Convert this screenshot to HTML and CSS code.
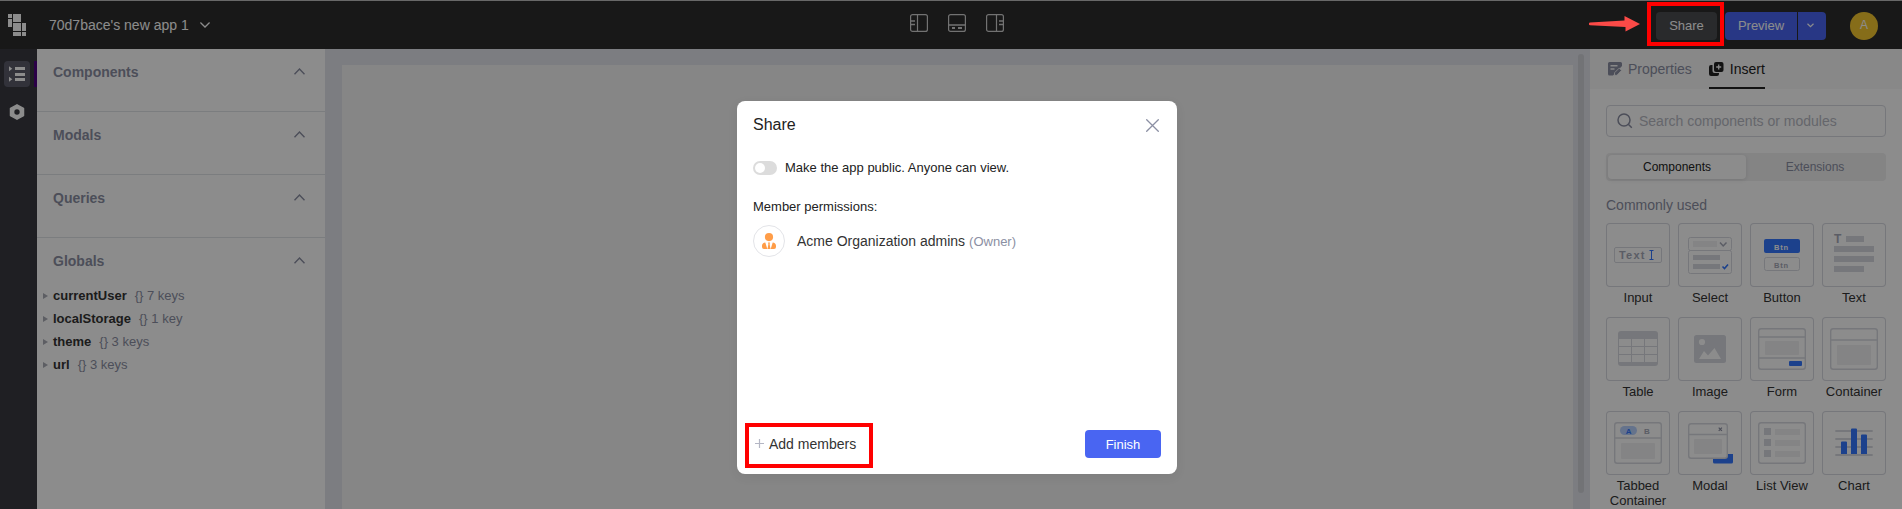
FILE: index.html
```html
<!DOCTYPE html>
<html lang="en">
<head>
<meta charset="utf-8">
<title>App editor</title>
<link rel="stylesheet" href="styles.css">
</head>
<body>
<div class="app">
  <header class="topbar">
    <div class="topbar-left">
      <svg class="logo" width="18" height="22" viewBox="0 0 18 22" fill="#fff"><path d="M0 0h4v4H0zM5 0h8v8H5zM0 5h4v8H0zM5 9h8v8H5zM14 9h4v8h-4zM5 18h8v4H5zM14 18h4v4h-4z"/></svg>
      <span class="app-name">70d7bace's new app 1</span>
      <svg width="10" height="6" viewBox="0 0 10 6" fill="none" stroke="#fff" stroke-width="1.3"><path d="M.4.5 5 5 9.6.5"/></svg>
    </div>
    <div class="layout-icons">
      <svg width="18" height="18" viewBox="0 0 18 18" fill="none" stroke="#d0d0d0"><rect x=".6" y=".6" width="16.8" height="16.8" rx="2" stroke-width="1.2"/><path d="M7.5 1v16" stroke-width="1.2"/><path d="M1 7h4M1 10.500h4" stroke-width="1.500"/></svg>
      <svg width="18" height="18" viewBox="0 0 18 18" fill="none" stroke="#d0d0d0"><rect x=".6" y=".6" width="16.8" height="16.8" rx="2" stroke-width="1.2"/><path d="M1 11h16" stroke-width="1.500"/><path d="M4 14h3M10 14h4" stroke-width="2"/></svg>
      <svg width="18" height="18" viewBox="0 0 18 18" fill="none" stroke="#d0d0d0"><rect x=".6" y=".6" width="16.800" height="16.800" rx="2" stroke-width="1.2"/><path d="M10.500 1v16" stroke-width="1.2"/><path d="M13 7h4M13 10.500h4" stroke-width="1.500"/></svg>
    </div>
    <div class="topbar-right">
      <button class="btn btn-share">Share</button>
      <div class="split">
        <button class="btn btn-preview">Preview</button>
        <button class="btn btn-more" aria-label="More"><svg width="7" height="5" viewBox="0 0 7 5" fill="none" stroke="#fff" stroke-width="1.2"><path d="M.5.8 3.500 3.700 6.500.8"/></svg></button>
      </div>
      <div class="user">A</div>
    </div>
  </header>
  <div class="body">
    <nav class="rail">
      <div class="rail-item active"><svg width="16" height="16" viewBox="0 0 16 16" fill="#fff"><path d="M0 .2 3.300 2.700 0 5.200zM0 10.800l3.300 2.500L0 15.800zM6 1h10v3H6zM6 7h10v3H6zM6 12h10v3H6z"/></svg></div>
      <div class="rail-item"><svg width="16" height="16" viewBox="0 0 16 16"><path d="M8 .8 14.500 4.400v7.200L8 15.200 1.500 11.600V4.400z" fill="#fff" stroke="#fff" stroke-width="1.500" stroke-linejoin="round"/><circle cx="8" cy="8" r="2.700" fill="#393a41"/></svg></div>
    </nav>
    <aside class="explorer">
      <section class="group"><h3>Components</h3><svg class="caret" viewBox="0 0 11 7"><path d="M.5 6.200 5.500 1l5 5.200"/></svg></section>
      <section class="group"><h3>Modals</h3><svg class="caret" viewBox="0 0 11 7"><path d="M.5 6.200 5.500 1l5 5.200"/></svg></section>
      <section class="group"><h3>Queries</h3><svg class="caret" viewBox="0 0 11 7"><path d="M.5 6.200 5.500 1l5 5.200"/></svg></section>
      <section class="group last"><h3>Globals</h3><svg class="caret" viewBox="0 0 11 7"><path d="M.5 6.200 5.500 1l5 5.200"/></svg></section>
      <ul class="tree">
        <li><b>currentUser</b><span>{} 7 keys</span></li>
        <li><b>localStorage</b><span>{} 1 key</span></li>
        <li><b>theme</b><span>{} 3 keys</span></li>
        <li><b>url</b><span>{} 3 keys</span></li>
      </ul>
    </aside>
    <main class="workspace"><div class="canvas"></div><div class="scrollbar"></div></main>
    <aside class="panel">
      <div class="tabs">
        <div class="tab"><svg width="14" height="14" viewBox="0 0 14 14"><path d="M1.500 0h11A1.500 1.500 0 0 1 14 1.500V4L5 13.500H1.500A1.500 1.500 0 0 1 0 12V1.500A1.500 1.500 0 0 1 1.500 0z" fill="#8b8fa3"/><path d="M2.500 3.700h7M2.500 7h4" stroke="#f7f7f7" stroke-width="1.400"/><path d="m6.500 10.800 4.700-4.700 2.300 2.300-4.600 4.900H6.500z" fill="#8b8fa3" stroke="#f7f7f7" stroke-width=".8"/></svg>Properties</div>
        <div class="tab current"><svg width="15" height="14" viewBox="0 0 15 14"><path d="M3.500 3H2a2 2 0 0 0-2 2v7a2 2 0 0 0 2 2h6a2 2 0 0 0 2-2v-1H5.500a2 2 0 0 1-2-2z" fill="#222"/><rect x="5" width="9.500" height="10" rx="2" fill="#222"/><path d="M9.700 2.500v5M7.200 5h5" stroke="#f7f7f7" stroke-width="1.300"/></svg>Insert</div>
      </div>
      <div class="panel-body">
        <div class="search"><svg width="16" height="16" viewBox="0 0 16 16" fill="none" stroke="#8b8fa3" stroke-width="1.500"><circle cx="7" cy="7" r="6"/><path d="m11.300 11.300 3.500 3.500"/></svg>Search components or modules</div>
        <div class="segmented"><div class="seg on">Components</div><div class="seg">Extensions</div></div>
        <h4>Commonly used</h4>
        <div class="grid">
          <figure><svg class="tile" viewBox="0 0 64 64"><rect x="8.500" y="24.500" width="47" height="15" rx="1.500" class="line"/><text x="13" y="35.500" class="glyph t11">Text</text><path d="M43.500 27.500h4M45.500 27.500v9M43.500 36.500h4" stroke="#37f" fill="none"/></svg><figcaption>Input</figcaption></figure>
          <figure><svg class="tile" viewBox="0 0 64 64"><rect x="10.500" y="14.500" width="43" height="13" rx="2" class="line"/><rect x="10.500" y="27.500" width="43" height="23" rx="2" class="line"/><path d="M15 18h24v6H15z" class="pale"/><path d="m42 19.500 3.200 3.500 3.300-3.500" fill="none" stroke="#a6a9b8" stroke-width="1.500"/><path d="M15 32h27v5H15zM15 41h27v5H15z" class="fill"/><path d="m44.500 43.500 2 2 3.500-4" fill="none" stroke="#37f" stroke-width="1.600"/></svg><figcaption>Select</figcaption></figure>
          <figure><svg class="tile" viewBox="0 0 64 64"><rect x="14" y="16" width="36" height="14" rx="2" class="blue"/><text x="24" y="27" class="glyph t7 white">Btn</text><rect x="14.500" y="34.500" width="35" height="13" rx="2" class="line"/><text x="24" y="45" class="glyph t7">Btn</text></svg><figcaption>Button</figcaption></figure>
          <figure><svg class="tile" viewBox="0 0 64 64"><text x="12" y="20" class="glyph t12">T</text><path d="M24 13h18v6H24zM12 23h40v6H12zM12 33h40v6H12zM12 43h30v6H12z" class="fill"/></svg><figcaption>Text</figcaption></figure>
          <figure><svg class="tile" viewBox="0 0 64 64"><rect x="12" y="14" width="40" height="35" rx="3" class="fill"/><path d="M13 22h12v7H13zM26 22h12v7H26zM39 22h12v7H39zM13 30h12v7H13zM26 30h12v7H26zM39 30h12v7H39zM13 38h12v7H13zM26 38h12v7H26zM39 38h12v7H39z" fill="#fff"/></svg><figcaption>Table</figcaption></figure>
          <figure><svg class="tile" viewBox="0 0 64 64"><rect x="16" y="18" width="32" height="28" rx="2.500" class="fill"/><circle cx="24" cy="25" r="3.100" fill="#fff"/><path d="m21 42 5-8 4 4.500 6.500-7.500 6.500 11z" fill="#fff"/></svg><figcaption>Image</figcaption></figure>
          <figure><svg class="tile" viewBox="0 0 64 64"><rect x="8.700" y="11.700" width="46.600" height="40.600" rx="2.500" class="line thick"/><path d="M9 20h46M9 41h46" class="line thick"/><rect x="15" y="24" width="34" height="14" rx="1" class="pale"/><rect x="39" y="44" width="13" height="5" rx="1" class="blue"/></svg><figcaption>Form</figcaption></figure>
          <figure><svg class="tile" viewBox="0 0 64 64"><rect x="8.700" y="11.700" width="46.600" height="40.600" rx="2.500" class="line thick"/><path d="M9 23h46" class="line thick"/><rect x="15" y="28" width="34" height="20" rx="1" class="pale"/></svg><figcaption>Container</figcaption></figure>
          <figure><svg class="tile" viewBox="0 0 64 64"><rect x="8.700" y="11.700" width="46.600" height="40.600" rx="2.500" class="line thick"/><path d="M9 27h46" class="line thick"/><rect x="14" y="15" width="17" height="9" rx="4.500" fill="#b9d2ff"/><text x="19.700" y="22.500" class="glyph t8 bluetext">A</text><text x="38" y="22.500" class="glyph t8">B</text><rect x="15" y="32" width="34" height="16" rx="1" class="pale"/></svg><figcaption>Tabbed Container</figcaption></figure>
          <figure><svg class="tile" viewBox="0 0 64 64"><path d="M35 43h20v8a1.500 1.500 0 0 1-1.500 1.500h-17A1.500 1.500 0 0 1 35 51z" class="blue"/><rect x="10.700" y="12.700" width="38.600" height="34.600" rx="2.500" class="line thick white-bg"/><path d="M11 23.500h38" class="line thick"/><path d="m40.700 16.700 3.200 3.200M43.900 16.700l-3.200 3.200" stroke="#8b8fa3" stroke-width="1.200"/><rect x="16" y="28" width="28" height="15" rx="1" class="pale"/></svg><figcaption>Modal</figcaption></figure>
          <figure><svg class="tile" viewBox="0 0 64 64"><rect x="8.700" y="11.700" width="46.600" height="40.600" rx="2.500" class="line thick"/><path d="M14 17h7v7h-7zM14 28h7v7h-7zM14 39h7v7h-7z" class="fill"/><path d="M25 18h25v6H25zM25 29h25v6H25zM25 40h25v6H25z" class="pale"/></svg><figcaption>List View</figcaption></figure>
          <figure><svg class="tile" viewBox="0 0 64 64"><path d="M14 20h36M14 28h36M14 36h36M14 44h36" class="line chart"/><path d="M19 31.500a1 1 0 0 1 1-1h4a1 1 0 0 1 1 1V43h-6zM29 18.500a1 1 0 0 1 1-1h4a1 1 0 0 1 1 1V43h-6zM39 24.500a1 1 0 0 1 1-1h4a1 1 0 0 1 1 1V43h-6z" class="blue"/></svg><figcaption>Chart</figcaption></figure>
        </div>
      </div>
    </aside>
  </div>
</div>

<div class="mask">
  <div class="dialog" role="dialog">
    <div class="dialog-head"><h2>Share</h2><svg width="13" height="13" viewBox="0 0 13 13" stroke="#8b8fa3" stroke-width="1.300" stroke-linecap="round"><path d="m.7.7 11.600 11.600M12.300.7.7 12.300"/></svg></div>
    <div class="public-row"><span class="switch"></span>Make the app public. Anyone can view.</div>
    <div class="perm-title">Member permissions:</div>
    <div class="member">
      <span class="member-icon"><svg width="16" height="16" viewBox="0 0 16 16" fill="#ff9d48"><circle cx="8" cy="4.100" r="4.100"/><path d="M4.300 9.500 6.300 16H3a2 2 0 0 1-2-2v-1.200c0-1.700 1.400-3.100 3.300-3.300zM11.700 9.500 9.700 16H13a2 2 0 0 0 2-2v-1.200c0-1.700-1.400-3.100-3.300-3.300zM7 9.500h2l-.4 1.500.9 5h-3l.9-5z"/></svg></span>
      <span class="member-name">Acme Organization admins</span><span class="role">(Owner)</span>
    </div>
    <div class="dialog-foot">
      <div class="add"><svg width="9" height="9" viewBox="0 0 9 9" stroke="#b4b6c4" stroke-width="1.200"><path d="M4.500 0v9M0 4.500h9"/></svg>Add members</div>
      <button class="btn finish">Finish</button>
    </div>
  </div>
</div>

<div class="callout callout-share"></div>
<div class="callout callout-add"></div>
<svg class="arrow" width="52" height="18" viewBox="0 0 52 18"><path d="M1 7.600 35.500 5.500V1L51 9l-14.500 7.500V12L1 10.200a1.300 1.300 0 0 1 0-2.600z" fill="#fb4a47"/></svg>
</body>
</html>
```
FILE: styles.css
```css
* { box-sizing: border-box; }
body { margin: 0; font: 13px/1.2 "Liberation Sans", Arial, sans-serif; color: #333; overflow: hidden; }
h2, h3, h4, ul, figure { margin: 0; padding: 0; }
svg { display: block; flex: none; }
button { font: inherit; border: 0; padding: 0; }

.app { height: 509px; display: flex; flex-direction: column; overflow: hidden; }
.topbar { height: 49px; flex: none; background: #2c2c2c; border-top: 1px solid #bebebe; display: grid; grid-template-columns: 1fr auto 1fr; align-items: center; padding: 0 24px 0 8px; color: #fff; }
.topbar-left { display: flex; align-items: center; height: 48px; }
.logo { margin-top: 0; }
.app-name { font-size: 14px; margin: 1px 11px 0 23px; }
.layout-icons { display: flex; gap: 20px; margin: -4px 0 0 28px; }
.topbar-right { display: flex; align-items: center; justify-content: flex-end; margin-top: 1px; }
.btn { height: 28px; border-radius: 4px; color: #fff; font-size: 13px; display: flex; align-items: center; justify-content: center; padding-top: 1px; }
.btn-share { width: 61px; background: #4b4d50; margin-right: 8px; }
.split { display: flex; gap: 1px; }
.btn-preview { width: 72px; background: #4965f2; border-radius: 4px 0 0 4px; }
.btn-more { width: 28px; background: #4965f2; border-radius: 0 4px 4px 0; padding: 0 4px 0 0; }
.user { width: 28px; height: 28px; border-radius: 50%; margin-left: 24px; background: #f5c72f; display: flex; align-items: center; justify-content: center; font-size: 12px; }

.body { flex: 1; display: flex; min-height: 0; }
.rail { width: 37px; background: #393a41; padding: 12px 0 0 4px; display: flex; flex-direction: column; gap: 12px; }
.rail-item { position: relative; width: 26px; height: 26px; border-radius: 4px; display: flex; align-items: center; justify-content: center; }
.rail-item.active { background: #5b5c6b; }
.rail-item.active::after { content: ""; position: absolute; left: 30px; top: 0; width: 3px; height: 26px; background: #4f0081; }
.explorer { width: 288px; background: #fff; color: #8b8fa3; }
.group { height: 63px; border-bottom: 1px solid #e1e3e8; display: flex; justify-content: space-between; padding: 14px 20px 0 16px; }
.group.last { height: 50px; border: 0; }
.group h3 { font-size: 14px; line-height: 18px; }
.caret { width: 11px; height: 7px; margin-top: 5px; fill: none; stroke: #8b8fa3; stroke-width: 1.4; }
.tree { list-style: none; padding: 0 0 0 6px; margin-top: -4px; }
.tree li { height: 23px; display: flex; align-items: center; color: #8b8fa3; }
.tree li::before { content: ""; border: 3.5px solid transparent; border-left: 5px solid #a9abb5; border-right: 0; margin-right: 5px; }
.tree b { color: #333; margin-right: 8px; }

.workspace { flex: 1; background: #e2e4ec; display: flex; padding: 0 6px 0 17px; gap: 5px; }
.canvas { flex: 1; margin-top: 16px; background: #f4f4f4; }
.scrollbar { width: 6px; height: 439px; margin-top: 5px; border-radius: 3px; background: #cfd1d8; }

.panel { width: 312px; background: #fff; }
.tabs { height: 40px; background: #f7f7f8; display: flex; gap: 17px; padding-left: 18px; font-size: 14px; }
.tab { display: flex; align-items: center; gap: 6px; color: #8b8fa3; height: 40px; padding-top: 2px; border-bottom: 2px solid transparent; }
.tab.current { color: #222; border-bottom-color: #222; }
.panel-body { padding: 16px; }
.search { height: 32px; width: 280px; border: 1px solid #d7d9e0; border-radius: 4px; display: flex; align-items: center; gap: 6px; padding-left: 10px; color: #b8bac4; font-size: 14px; }
.segmented { width: 280px; height: 28px; margin-top: 16px; padding: 2px; border-radius: 4px; background: #f0f0f1; display: flex; font-size: 12px; color: #8b8fa3; }
.seg { flex: 1; display: flex; align-items: center; justify-content: center; border-radius: 4px; }
.seg.on { background: #fff; color: #222; box-shadow: 0 1px 4px rgba(0,0,0,.1); }
.panel h4 { font-size: 14px; font-weight: 400; line-height: 18px; margin: 15px 0 9px; color: #8b8fa3; }
.grid { display: grid; grid-template-columns: repeat(4, 64px); column-gap: 8px; row-gap: 12px; }
figure { text-align: center; }
.tile { width: 64px; height: 64px; box-shadow: inset 0 0 0 1px #d7d9e0; border-radius: 4px; }
figcaption { margin: 3px -4px 0; line-height: 15px; font-size: 13px; }
.line { fill: none; stroke: #d7d9e0; }
.thick { stroke-width: 1.4; }
.chart { stroke-width: 1.8; stroke-linecap: round; }
.white-bg { fill: #fff; }
.fill { fill: #d7d9e0; }
.pale { fill: #f0f0f2; }
.blue { fill: #37f; }
.glyph { font-weight: 700; fill: #a6a9b8; letter-spacing: 1.2px; }
.t7 { font-size: 7.5px; letter-spacing: .8px; }
.t8 { font-size: 8px; }
.t11 { font-size: 11px; }
.t12 { font-size: 12px; }
.white { fill: #fff; }
.bluetext { fill: #37f; }

.mask { position: absolute; inset: 0; background: rgba(0,0,0,.45); display: flex; align-items: flex-start; justify-content: center; padding: 101px 0 0 12px; }
.dialog { width: 440px; height: 373px; background: #fff; border-radius: 8px; padding: 0 16px; display: flex; flex-direction: column; color: #222; box-shadow: 0 3px 12px rgba(0,0,0,.06); }
.dialog-head { display: flex; justify-content: space-between; padding: 14px 2px 0 0; }
.dialog-head h2 { font-size: 16px; font-weight: 400; line-height: 20px; }
.dialog-head svg { margin-top: 4px; }
.public-row { display: flex; align-items: center; gap: 8px; height: 20px; margin-top: 23px; }
.switch { width: 24px; height: 14px; border-radius: 7px; background: #dcdcdc; padding: 2px; }
.switch::before { content: ""; display: block; width: 10px; height: 10px; border-radius: 50%; background: #fff; }
.perm-title { margin-top: 20px; line-height: 18px; }
.member { display: flex; align-items: center; margin-top: 9px; }
.member-icon { width: 32px; height: 32px; border: 1px solid #e3e4e8; border-radius: 50%; display: flex; align-items: center; justify-content: center; margin-right: 12px; }
.member-name { font-size: 14px; color: #333; margin-right: 4px; }
.role { color: #8b8fa3; padding-top: 1px; }
.dialog-foot { margin-top: auto; padding-bottom: 16px; display: flex; justify-content: space-between; align-items: center; }
.add { display: flex; align-items: center; gap: 5px; padding-left: 2px; font-size: 14px; color: #333; }
.finish { width: 76px; background: #4965f2; }

.callout { position: absolute; border: 4px solid #f00; }
.callout-share { left: 1647px; top: 2px; width: 77px; height: 44px; }
.callout-add { left: 745px; top: 423px; width: 128px; height: 45px; }
.arrow { position: absolute; left: 1589px; top: 15px; }
```
